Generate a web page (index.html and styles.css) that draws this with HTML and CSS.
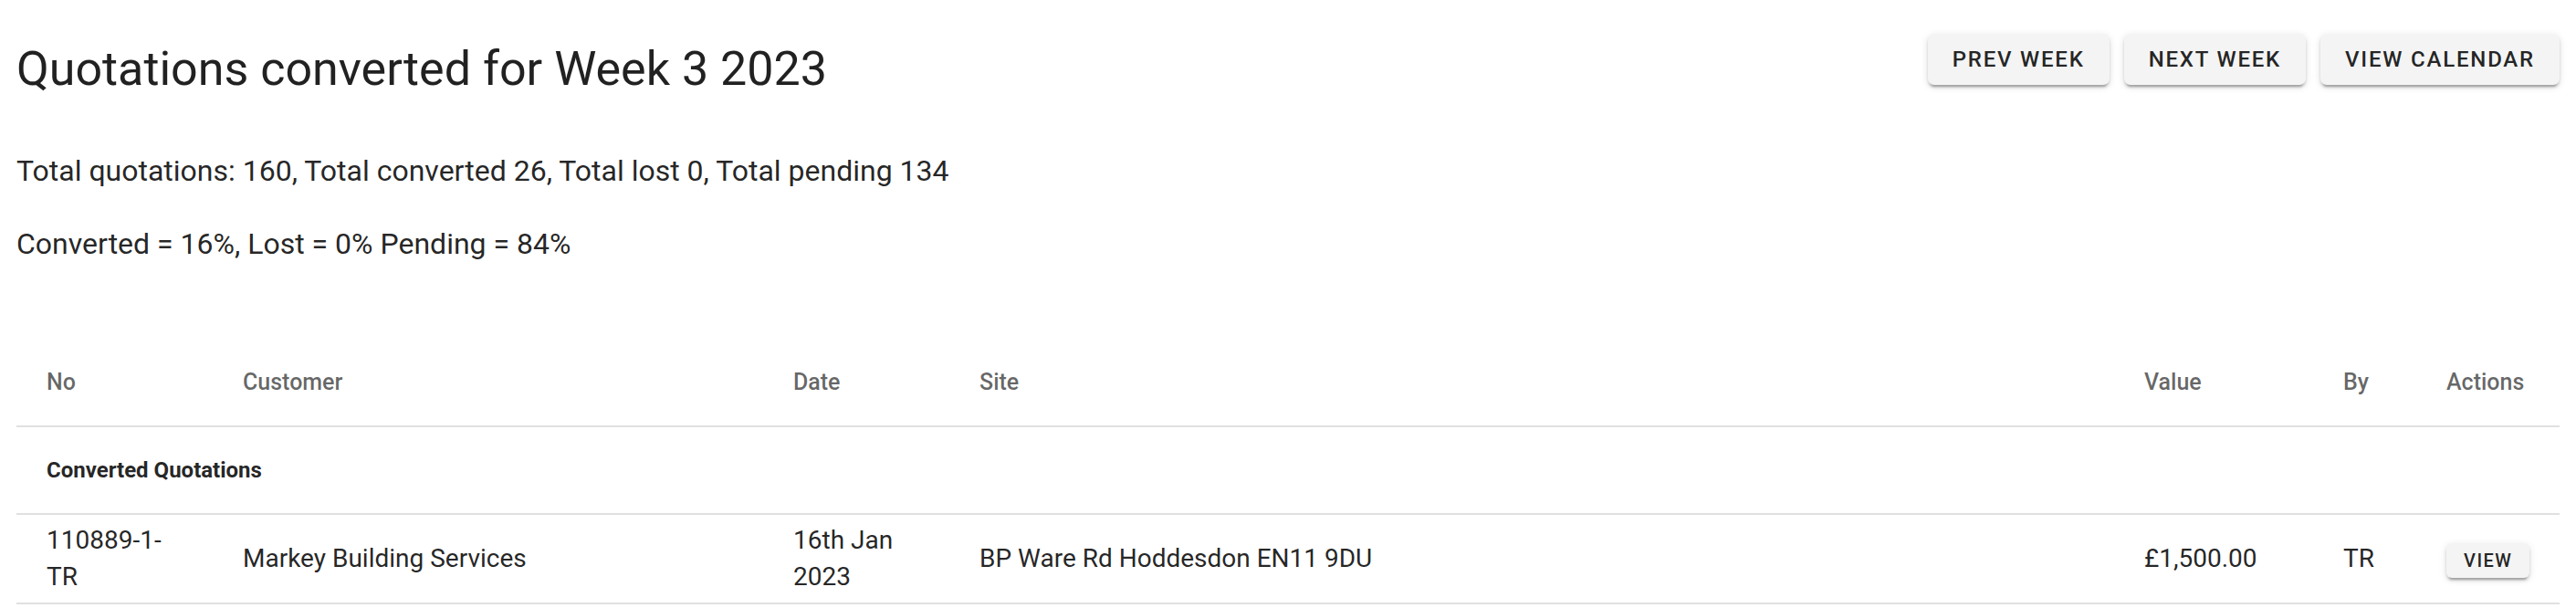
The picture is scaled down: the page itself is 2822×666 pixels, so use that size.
FILE: index.html
```html
<!DOCTYPE html>
<html lang="en">
<head>
    <meta charset="UTF-8">
    <meta name="viewport" content="width=device-width, initial-scale=1.0">
    <title>Quotations converted</title>
    <link rel="stylesheet" href="styles.css">
</head>
<body>
    <div class="page">
        <div class="top">
            <h1 class="title">Quotations converted for Week 3 2023</h1>
            <div class="nav-buttons">
                <button type="button" class="btn">Prev Week</button>
                <button type="button" class="btn">Next Week</button>
                <button type="button" class="btn">View Calendar</button>
            </div>
        </div>

        <p class="summary">Total quotations: 160, Total converted 26, Total lost 0, Total pending 134</p>
        <p class="summary">Converted = 16%, Lost = 0% Pending = 84%</p>

        <table class="quotes">
            <colgroup>
                <col class="col-no">
                <col class="col-customer">
                <col class="col-date">
                <col class="col-site">
                <col class="col-value">
                <col class="col-by">
                <col class="col-actions">
            </colgroup>
            <thead>
                <tr>
                    <th>No</th>
                    <th>Customer</th>
                    <th>Date</th>
                    <th>Site</th>
                    <th>Value</th>
                    <th>By</th>
                    <th>Actions</th>
                </tr>
            </thead>
            <tbody>
                <tr class="group-row">
                    <td colspan="7">Converted Quotations</td>
                </tr>
                <tr>
                    <td>110889-1-TR</td>
                    <td>Markey Building Services</td>
                    <td>16th Jan 2023</td>
                    <td>BP Ware Rd Hoddesdon EN11 9DU</td>
                    <td>&pound;1,500.00</td>
                    <td>TR</td>
                    <td><button type="button" class="btn btn-small">View</button></td>
                </tr>
            </tbody>
        </table>
    </div>
</body>
</html>
```

FILE: styles.css
```css
body {
    margin: 0;
    font-family: Roboto, "Liberation Sans", Arial, sans-serif;
    color: rgba(0, 0, 0, 0.87);
    background: #fff;
}
.page {
    padding: 0 18px 18px;
}
.top {
    display: flex;
    justify-content: space-between;
    align-items: flex-start;
    padding-top: 37px;
}
.title {
    margin: 7px 0 0;
    font-size: 52px;
    font-weight: 400;
    line-height: 64px;
}
.nav-buttons {
    display: flex;
    gap: 16px;
}
.btn {
    font-family: inherit;
    font-size: 24px;
    font-weight: 500;
    letter-spacing: 0.075em;
    text-transform: uppercase;
    color: rgba(0, 0, 0, 0.87);
    background-color: #f4f4f4;
    border: none;
    border-radius: 7px;
    height: 56px;
    padding: 0 27px;
    box-shadow: 0 5px 2px -3px rgba(0, 0, 0, 0.2), 0 3px 3px 0 rgba(0, 0, 0, 0.14), 0 2px 8px 0 rgba(0, 0, 0, 0.12);
}
.btn-small {
    font-size: 20px;
    height: 38px;
    padding: 0 19px;
    border-radius: 6px;
}
.summary {
    font-size: 32px;
    line-height: 42px;
    margin: 0 0 38px;
}
.summary:first-of-type {
    margin-top: 58px;
}
.quotes {
    width: 100%;
    table-layout: fixed;
    border-collapse: collapse;
    margin-top: 84px;
}
.col-no { width: 215px; }
.col-customer { width: 603px; }
.col-date { width: 204px; }
.col-site { width: 1276px; }
.col-value { width: 218px; }
.col-by { width: 113px; }
.col-actions { width: 157px; }
.quotes th,
.quotes td {
    text-align: left;
    padding: 8px 33px;
    height: 78px;
    border-bottom: 2px solid #e0e0e0;
    vertical-align: middle;
}
.quotes th {
    font-size: 25px;
    font-weight: 500;
    color: rgba(0, 0, 0, 0.6);
    line-height: 32px;
}
.quotes td {
    font-size: 28px;
    line-height: 40px;
}
.quotes .group-row td {
    font-size: 24px;
    font-weight: 700;
}
```
